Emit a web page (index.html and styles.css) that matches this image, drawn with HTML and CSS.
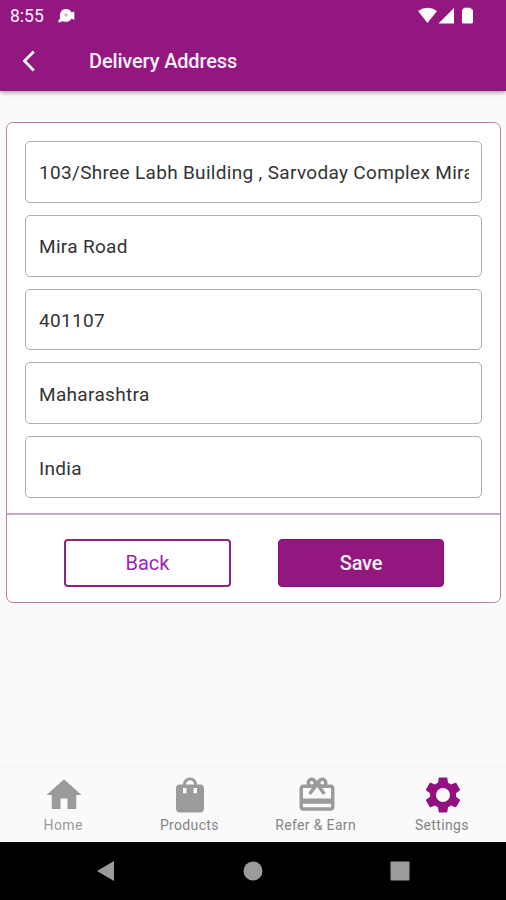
FILE: index.html
```html
<!DOCTYPE html>
<html lang="en">
<head>
<meta charset="utf-8">
<title>Delivery Address</title>
<link rel="stylesheet" href="styles.css">
</head>
<body>
<div class="screen">
  <header class="top">
    <div class="status">
      <span class="time">8:55</span>
      <svg class="notif" viewBox="0 0 17 16"><path fill="#fff" d="M.5 14.500V12L2.200 10.800C1 6 3 1 8 1C11 1 12.800 2.500 13.500 4.500L16.300 3.500V12L13.600 10.500C12 13.800 8 14.600 5 13.200Z"/><circle cx="8" cy="7" r="1.700" fill="#d9b4d4"/></svg>
      <svg class="signals" viewBox="0 0 57 18"><g fill="#fff"><path d="M0 4Q9.500-2.500 19 4L9.500 16Z"/><path d="M20.500 16.500H36V1Z"/><path d="M44 3.500Q44 2.200 45.500 2V.8H53V2Q55 2.200 55 3.500V15Q55 16.500 53.500 16.500H45.500Q44 16.500 44 15Z"/></g></svg>
    </div>
    <div class="bar">
      <svg class="chev" viewBox="0 0 14 22"><path d="M11.800 1.500 2.500 11l9.300 9.500" fill="none" stroke="#fff" stroke-width="2.700"/></svg>
      <h1 class="title">Delivery Address</h1>
    </div>
  </header>
  <main class="content">
    <form class="card">
      <div class="fields">
        <input class="field" type="text" value="103/Shree Labh Building , Sarvoday Complex Mira Road">
        <input class="field" type="text" value="Mira Road">
        <input class="field" type="text" value="401107">
        <input class="field" type="text" value="Maharashtra">
        <input class="field" type="text" value="India">
      </div>
      <div class="actions">
        <button class="btn back" type="button">Back</button>
        <button class="btn save" type="button">Save</button>
      </div>
    </form>
  </main>
  <nav class="tabs">
    <div class="tab"><svg viewBox="0 0 24 24"><path d="M10 20v-6h4v6h5v-8h3L12 3 2 12h3v8z"/></svg><span class="home-label">Home</span></div>
    <div class="tab"><svg viewBox="0 0 24 24"><path d="M18 6h-2c0-2.210-1.790-4-4-4S8 3.790 8 6H6c-1.100 0-2 .9-2 2v12c0 1.100.9 2 2 2h12c1.100 0 2-.9 2-2V8c0-1.100-.9-2-2-2zm-8 5H8V8h2v3zm2-7.500c1.400 0 2.300 1.100 2.300 2.500h-4.600c0-1.400.9-2.500 2.300-2.500zm4 7.500h-2V8h2v3z"/></svg><span>Products</span></div>
    <div class="tab"><svg viewBox="0 0 24 24"><path d="M20 6h-2.180c.11-.31.18-.65.18-1 0-1.660-1.340-3-3-3-1.050 0-1.960.54-2.500 1.350l-.5.67-.5-.68C10.960 2.540 10.050 2 9 2 7.340 2 6 3.340 6 5c0 .35.07.69.18 1H4c-1.110 0-1.990.89-1.990 2L2 19c0 1.110.89 2 2 2h16c1.110 0 2-.89 2-2V8c0-1.110-.89-2-2-2zm-5-2c.55 0 1 .45 1 1s-.45 1-1 1-1-.45-1-1 .45-1 1-1zM9 4c.55 0 1 .45 1 1s-.45 1-1 1-1-.45-1-1 .45-1 1-1zm11 15H4v-2h16v2zm0-5H4V8h5.080L7 10.830 8.620 12 11 8.760l1-1.360 1 1.360L15.380 12 17 10.830 14.920 8H20v6z"/></svg><span>Refer &amp; Earn</span></div>
    <div class="tab active"><svg viewBox="0 0 24 24"><path d="M19.430 12.980c.04-.32.07-.64.07-.98s-.03-.66-.07-.98l2.110-1.650c.19-.15.24-.42.12-.64l-2-3.460c-.12-.22-.39-.3-.61-.22l-2.490 1c-.52-.4-1.080-.73-1.690-.98l-.38-2.650C14.460 2.180 14.250 2 14 2h-4c-.25 0-.46.18-.49.42l-.38 2.650c-.61.25-1.170.59-1.690.98l-2.490-1c-.23-.09-.49 0-.61.22l-2 3.460c-.13.22-.07.49.12.64l2.110 1.650c-.04.32-.07.65-.07.98s.03.66.07.98l-2.110 1.650c-.19.15-.24.42-.12.64l2 3.460c.12.22.39.3.61.22l2.490-1c.52.4 1.080.73 1.690.98l.38 2.650c.03.24.24.42.49.42h4c.25 0 .46-.18.49-.42l.38-2.650c.61-.25 1.170-.59 1.690-.98l2.490 1c.23.09.49 0 .61-.22l2-3.460c.12-.22.07-.49-.12-.64l-2.110-1.650zM12 16a4 4 0 1 1 0-8 4 4 0 0 1 0 8z"/></svg><span>Settings</span></div>
  </nav>
  <div class="system">
    <svg viewBox="0 0 20 22"><path d="M1 11 18 1v20z"/></svg>
    <svg viewBox="0 0 20 22"><circle cx="10" cy="11" r="9.500"/></svg>
    <svg viewBox="0 0 20 22"><rect x=".5" y="1.500" width="19" height="19" rx="1"/></svg>
  </div>
</div>
</body>
</html>
```
FILE: styles.css
```css
* { box-sizing: border-box; }
body { margin: 0; font-family: Roboto, "Liberation Sans", sans-serif; }
.screen { width: 506px; height: 900px; display: flex; flex-direction: column; background: #fafafa; overflow: hidden; }
.top { height: 91px; flex: none; background: #92187f; color: #fff; box-shadow: 0 1px 5px rgba(0,0,0,.45); }
.status { height: 31px; display: flex; align-items: center; padding: 1px 31px 0 10px; }
.time { font-size: 17.500px; font-weight: 400; color: #fdeefa; }
.notif { width: 17px; height: 16px; margin-left: 14px; }
.signals { width: 57px; height: 18px; margin-left: auto; }
.bar { height: 60px; display: flex; align-items: center; padding-left: 22px; }
.chev { width: 14px; height: 22px; }
.title { margin: 0 0 0 53px; font-size: 20px; font-weight: 500; letter-spacing: -.15px; color: #fdeefa; }
.content { flex: 1; padding: 31px 5px 0 6px; }
.card { height: 481px; border: 1px solid #b680aa; border-radius: 7px; background: #fff; display: flex; flex-direction: column; }
.fields { display: flex; flex-direction: column; gap: 12px; padding: 18px 18px 0; height: 390px; }
.field { width: 100%; height: 61.800px; flex: none; margin: 0; padding: 2px 12px 0 13px; border: 1px solid #adadad; border-radius: 5px; background: #fff; font: 400 19px Roboto, sans-serif; letter-spacing: .32px; color: #333; }
.actions { flex: 1; border-top: 2px solid #c9abc4; display: flex; gap: 47px; padding: 24px 0 0 57px; }
.btn { width: 167px; height: 48px; padding: 0; border-radius: 4px; font: 400 20px Roboto, sans-serif; }
.back { background: #fff; border: 2px solid #8c247c; color: #9c27b0; letter-spacing: 0; }
.save { width: 166px; background: #92187f; border: 1px solid #8b0c78; color: #fdeefa; font-weight: 500; letter-spacing: -.2px; }
.tabs { height: 76px; flex: none; display: flex; border-top: 1px solid #f4f4f4; padding: 7px 0 0 1px; }
.tab { flex: 1; display: flex; flex-direction: column; align-items: center; color: #858585; font-size: 14px; letter-spacing: .35px; line-height: 19px; }
.tab span { margin-right: 2px; }
.tab svg { width: 42px; height: 42px; fill: #9b9b9b; }
.active svg { fill: #92107f; }
.tab .home-label { color: #9b9b9b; }
.system { height: 58px; flex: none; background: #000; display: flex; gap: 127px; padding: 18px 0 0 96px; }
.system svg { width: 20px; height: 22px; fill: #9b9b9b; }
```
